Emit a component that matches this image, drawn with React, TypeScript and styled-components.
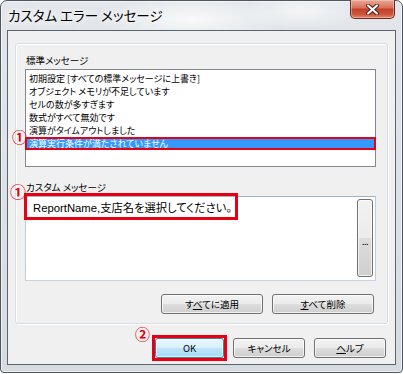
import React from 'react';
import styled, { createGlobalStyle } from 'styled-components';

const GlobalStyle = createGlobalStyle`
  html, body {
    margin: 0;
    padding: 0;
    background: #fff;
  }
  body {
    font-family: "Noto Sans CJK JP", "Liberation Sans", sans-serif;
    font-feature-settings: "palt";
  }
`;

const RED = '#e60012';

const Window = styled.div`
  width: 403px;
  height: 373px;
  box-sizing: border-box;
  border: 1px solid #4f5660;
  border-radius: 7px 7px 4px 4px;
  padding: 0 6px 7px;
  display: flex;
  flex-direction: column;
  background:
    radial-gradient(ellipse 90px 22px at 190px 18px, rgba(255, 255, 255, 0.75), rgba(255, 255, 255, 0)),
    radial-gradient(ellipse 60px 18px at 300px 10px, rgba(255, 255, 255, 0.6), rgba(255, 255, 255, 0)),
    linear-gradient(to bottom, #e3e7eb, #d6dbe0);
  box-shadow: inset 0 0 0 1px rgba(255, 255, 255, 0.55);
`;

const TitleBar = styled.div`
  height: 29px;
  display: flex;
  align-items: flex-start;
  justify-content: space-between;
`;

const Title = styled.div`
  font-size: 13.5px;
  line-height: 28px;
  padding-left: 1px;
  color: #000;
  text-shadow: 0 0 6px #fff, 0 0 10px #fff;
`;

const CloseButton = styled.div`
  width: 45px;
  height: 19px;
  box-sizing: border-box;
  margin-top: -1px;
  margin-right: 1px;
  border: 1px solid #6c2a20;
  border-top: none;
  border-radius: 0 0 5px 5px;
  background: linear-gradient(#e9a898 0%, #d7735e 42%, #c4402a 52%, #cf553c 80%, #e38a6c 100%);
  box-shadow: inset 0 0 0 1px rgba(255, 210, 200, 0.45);
  display: flex;
  align-items: center;
  justify-content: center;
`;

const Client = styled.div`
  flex: 1;
  box-sizing: border-box;
  border: 1px solid #5b6570;
  background: #f0f0f0;
  padding: 12px 7px 3px;
  display: flex;
  flex-direction: column;
`;

const Group = styled.div`
  border: 1px solid #d5dfe5;
  border-radius: 3px;
  box-shadow: inset 1px 1px 0 #fff, 1px 1px 0 #fff;
  padding: 8px 11px 9px 9px;
  display: flex;
  flex-direction: column;
`;

const FieldLabel = styled.div<{ $gap?: number }>`
  position: relative;
  font-size: 9.5px;
  line-height: 16px;
  padding-left: 1px;
  margin-top: ${({ $gap }) => $gap ?? 0}px;
  color: #000;
`;

const Badge = styled.span<{ $left: number; $top: number; $size?: number }>`
  position: absolute;
  left: ${({ $left }) => $left}px;
  top: ${({ $top }) => $top}px;
  font-family: "Noto Sans CJK JP", sans-serif;
  font-size: ${({ $size }) => $size ?? 15}px;
  font-weight: 700;
  line-height: 1;
  color: ${RED};
`;

const ListBox = styled.div`
  height: 98px;
  box-sizing: border-box;
  margin-top: 1px;
  border: 1px solid #828790;
  background: #fff;
  padding-top: 2px;
`;

const ListItem = styled.div<{ $selected?: boolean }>`
  position: relative;
  height: 13px;
  line-height: 13px;
  font-size: 9px;
  padding-left: ${({ $selected }) => ($selected ? 4 : 3)}px;
  margin: ${({ $selected }) => ($selected ? '0 -1px' : '0')};
  white-space: nowrap;
  color: ${({ $selected }) => ($selected ? '#fff' : '#000')};
  background: ${({ $selected }) => ($selected ? '#3399ff' : 'transparent')};
  box-shadow: ${({ $selected }) => ($selected ? `inset 0 0 0 2px ${RED}` : 'none')};
`;

const TextBox = styled.div`
  height: 85px;
  box-sizing: border-box;
  margin-top: 1px;
  border: 1px solid;
  border-color: #9fb3c7 #bccddd #c6d6e6 #bccddd;
  background: #fff;
  display: flex;
  align-items: flex-start;
  justify-content: space-between;
`;

const MessageText = styled.div`
  margin: -4px 0 0 -2px;
  border: 3px solid ${RED};
  padding: 4px 3px 1px 6px;
  font-family: "Liberation Sans", "Noto Sans CJK JP", sans-serif;
  font-size: 11.3px;
  line-height: 16px;
  white-space: nowrap;
  color: #000;
`;

const EllipsisButton = styled.div`
  width: 16px;
  height: 78px;
  box-sizing: border-box;
  margin: 2px 2px 0 0;
  border: 1px solid #707070;
  border-radius: 3px;
  background: linear-gradient(#f2f2f2 0%, #ebebeb 50%, #dddddd 50%, #cfcfcf 100%);
  box-shadow: inset 0 0 0 1px rgba(255, 255, 255, 0.7);
  display: flex;
  align-items: center;
  justify-content: center;
  padding-top: 6px;
  font-size: 9px;
  letter-spacing: -0.5px;
  color: #000;
`;

const ButtonRow = styled.div`
  display: flex;
  justify-content: flex-end;
  gap: 9px;
  margin-top: 13px;
  padding-right: 2px;
`;

const Button = styled.button<{ $width: number; $default?: boolean }>`
  width: ${({ $width }) => $width}px;
  height: 20px;
  box-sizing: border-box;
  padding: 0;
  border: 1px solid ${({ $default }) => ($default ? '#3c7fb1' : '#707070')};
  border-radius: 3px;
  background: ${({ $default }) =>
    $default
      ? 'linear-gradient(#eaf6fd 0%, #d9f0fc 50%, #bee6fd 50%, #a7d9f5 100%)'
      : 'linear-gradient(#f2f2f2 0%, #ebebeb 50%, #dddddd 50%, #cfcfcf 100%)'};
  box-shadow: inset 0 0 0 1px rgba(255, 255, 255, 0.7);
  font-family: "Noto Sans CJK JP", "Liberation Sans", sans-serif;
  font-feature-settings: "palt";
  font-size: 9.5px;
  line-height: 18px;
  color: #000;

  u {
    text-underline-offset: 1px;
  }
`;

const FooterRow = styled.div`
  display: flex;
  justify-content: flex-end;
  align-items: center;
  height: 26px;
  margin-top: 11px;
  padding-right: 2px;
`;

const FocusMark = styled.div`
  position: relative;
  display: flex;
  border: 3px solid ${RED};
`;

const Spacer = styled.div<{ $w: number }>`
  width: ${({ $w }) => $w}px;
`;

const messages = [
  '初期設定 [すべての標準メッセージに上書き]',
  'オブジェクト メモリが不足しています',
  'セルの数が多すぎます',
  '数式がすべて無効です',
  '演算がタイムアウトしました',
  '演算実行条件が満たされていません',
];

function CloseGlyph() {
  return (
    <svg width="13" height="11" viewBox="0 0 13 11">
      <path d="M2 1.5 L11 9.5 M11 1.5 L2 9.5" stroke="#4a1d16" strokeWidth="4" strokeLinecap="round" />
      <path d="M2 1.5 L11 9.5 M11 1.5 L2 9.5" stroke="#fff" strokeWidth="2.2" strokeLinecap="round" />
    </svg>
  );
}

export default function App() {
  return (
    <>
      <GlobalStyle />
      <Window>
        <TitleBar>
          <Title>カスタム エラー メッセージ</Title>
          <CloseButton>
            <CloseGlyph />
          </CloseButton>
        </TitleBar>
        <Client>
          <Group>
            <FieldLabel>標準メッセージ</FieldLabel>
            <ListBox>
              {messages.map((m, i) => {
                const selected = i === messages.length - 1;
                return (
                  <ListItem key={m} $selected={selected}>
                    {selected && (
                      <Badge $left={-13} $top={-8}>
                        ①
                      </Badge>
                    )}
                    {m}
                  </ListItem>
                );
              })}
            </ListBox>
            <FieldLabel $gap={12}>
              <Badge $left={-15} $top={4} $size={16}>
                ①
              </Badge>
              カスタム メッセージ
            </FieldLabel>
            <TextBox>
              <MessageText>ReportName,支店名を選択してください。</MessageText>
              <EllipsisButton>...</EllipsisButton>
            </TextBox>
            <ButtonRow>
              <Button $width={102}>
                す<u>べ</u>てに適用
              </Button>
              <Button $width={102}>
                <u>す</u>べて削除
              </Button>
            </ButtonRow>
          </Group>
          <FooterRow>
            <FocusMark>
              <Badge $left={-20} $top={-12}>
                ②
              </Badge>
              <Button $width={69} $default>
                OK
              </Button>
            </FocusMark>
            <Spacer $w={6} />
            <Button $width={72}>キャンセル</Button>
            <Spacer $w={9} />
            <Button $width={72}>
              <u>ヘ</u>ルプ
            </Button>
          </FooterRow>
        </Client>
      </Window>
    </>
  );
}
